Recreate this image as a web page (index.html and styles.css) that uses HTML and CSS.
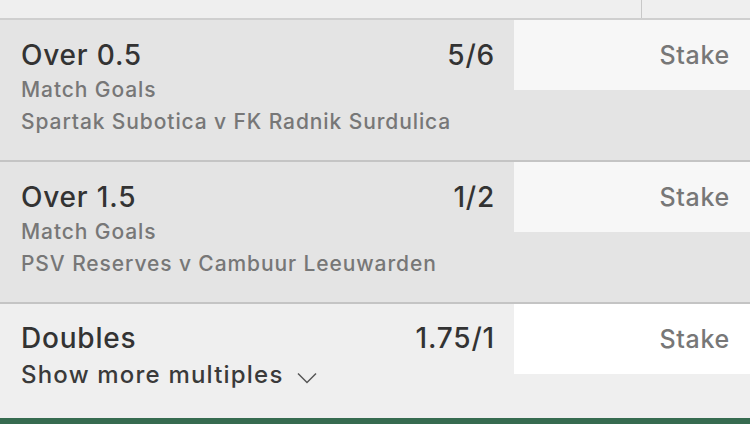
FILE: index.html
```html
<!DOCTYPE html>
<html lang="en">
<head>
    <meta charset="UTF-8">
    <meta name="viewport" content="width=device-width, initial-scale=1.0">
    <title>Bet Slip</title>
    <link rel="stylesheet" href="styles.css">
</head>
<body>
    <div class="slip">
        <div class="tabs">
            <div class="tab"></div>
            <div class="tab tab-last"></div>
        </div>

        <div class="bet">
            <div class="info">
                <div class="line">
                    <span class="name">Over 0.5</span>
                    <span class="odds">5/6</span>
                </div>
                <div class="market">Match Goals</div>
                <div class="event">Spartak Subotica v FK Radnik Surdulica</div>
            </div>
            <div class="stake">Stake</div>
        </div>

        <div class="bet">
            <div class="info">
                <div class="line">
                    <span class="name">Over 1.5</span>
                    <span class="odds">1/2</span>
                </div>
                <div class="market">Match Goals</div>
                <div class="event">PSV Reserves v Cambuur Leeuwarden</div>
            </div>
            <div class="stake">Stake</div>
        </div>

        <div class="bet multiple">
            <div class="info">
                <div class="line">
                    <span class="name">Doubles</span>
                    <span class="odds">1.75/1</span>
                </div>
                <div class="more">
                    Show more multiples
                    <svg class="chevron" width="20" height="12" viewBox="0 0 20 12">
                        <path d="M1 1.5 L10 10.5 L19 1.5" fill="none" stroke="#555" stroke-width="1.5"/>
                    </svg>
                </div>
            </div>
            <div class="stake">Stake</div>
        </div>

        <div class="footer"></div>
    </div>
</body>
</html>
```

FILE: styles.css
```css
body {
    margin: 0;
    font-family: Inter, 'Noto Sans', sans-serif;
    font-weight: 500;
    color: #333;
    background: #efefef;
}
.slip {
    width: 750px;
    height: 424px;
    overflow: hidden;
}
.tabs {
    display: flex;
    height: 18px;
    background: #efefef;
    border-bottom: 2px solid #cfcfcf;
}
.tab {
    width: 641px;
    border-right: 1px solid #c8c8c8;
}
.tab-last {
    flex: 1;
    border-right: none;
}
.bet {
    display: flex;
    height: 140px;
    background: #e4e4e4;
    border-bottom: 2px solid #c4c4c4;
}
.info {
    width: 472px;
    padding: 0 21px;
}
.line {
    display: flex;
    justify-content: space-between;
    font-size: 28px;
    line-height: 32px;
    margin-top: 19px;
    letter-spacing: 0.8px;
}
.odds {
    margin-right: -2px;
}
.market,
.event {
    font-size: 21px;
    color: #777;
    letter-spacing: 0.9px;
}
.market {
    line-height: 24px;
    margin-top: 7px;
}
.event {
    line-height: 24px;
    margin-top: 8px;
}
.stake {
    width: 216px;
    height: 70px;
    padding-right: 20px;
    text-align: right;
    font-size: 25px;
    line-height: 70px;
    color: #777;
    background: #f7f7f7;
    letter-spacing: 0.7px;
}
.multiple {
    height: 114px;
    background: #efefef;
    border-bottom: none;
}
.multiple .line {
    margin-top: 18px;
}
.multiple .stake {
    background: #fff;
}
.more {
    font-size: 24px;
    line-height: 28px;
    margin-top: 7px;
    color: #3a3a3a;
    letter-spacing: 1.2px;
}
.chevron {
    margin-left: 6px;
    vertical-align: -1px;
}
.footer {
    height: 6px;
    background: #366b50;
}
```
